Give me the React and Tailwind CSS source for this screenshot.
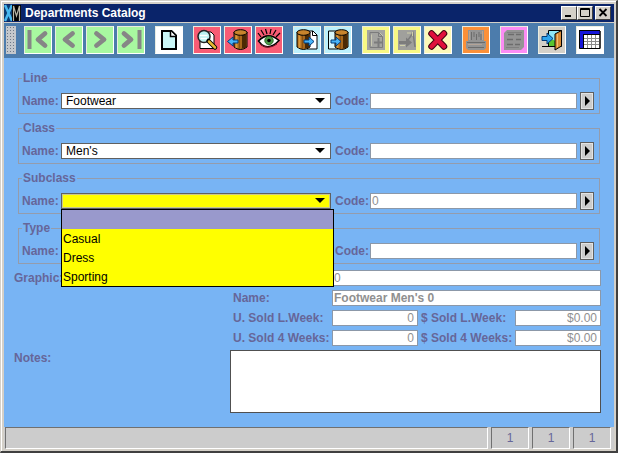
import React, { useState } from "react";

const outline = { stroke: "#000", strokeWidth: 1, strokeLinejoin: "round" };

const Chevron = ({ flip, bar }) => (
  <svg viewBox="1 1 26 26" className="size-full" aria-hidden="true">
    <g transform={flip ? "translate(28 0) scale(-1 1)" : undefined} fill="none" stroke="#868686">
      <path
        d={bar ? "M21 7.500 L14 13.500 L21 19.500" : "M17.500 7.500 L10 13.500 L17.500 19.500"}
        strokeWidth="4.800"
        strokeLinecap="round"
        strokeLinejoin="round"
      />
      {bar && <path d="M5.500 4 V23" strokeWidth="4" />}
    </g>
  </svg>
);

const Svg = ({ children }) => (
  <svg viewBox="1 1 26 26" className="size-full" aria-hidden="true">
    {children}
  </svg>
);

const Barrel = ({ x = 0 }) => (
  <g transform={`translate(${x} 0)`}>
    <path d="M9 6 V21 Q15.500 26 22 21 V6 Z" fill="#a8681c" {...outline} />
    <path d="M11.500 9 V22" stroke="#dc9838" strokeWidth="2" />
    <path d="M14.500 10 V23" stroke="#8a5010" />
    <path d="M19 9 V22" stroke="#4c2a04" strokeWidth="4" />
    <ellipse cx="15.500" cy="6.500" rx="6.500" ry="2.800" fill="#c8842c" {...outline} />
  </g>
);

const RightArrow = ({ x = 0, y = 0 }) => (
  <path transform={`translate(${x} ${y})`} d="M0 -1.500 H5 V-4.500 L10 0 L5 4.500 V1.500 H0 Z" fill="#48b4f8" stroke="#003a78" />
);

const NewIcon = () => (
  <Svg>
    <path d="M7 5 H16.500 L21 9.500 V23 H7 Z" fill="#caf6f6" stroke="#000" strokeWidth="2" />
    <path d="M15.500 5 V10.500 H21" fill="#fff" stroke="#000" strokeWidth="1.500" />
  </Svg>
);

const SearchIcon = () => (
  <Svg>
    <path d="M7 6 H18 L21 9 V22.500 H7 Z" fill="#fff" {...outline} />
    <circle cx="11" cy="10.500" r="6" fill="#baf0f0" stroke="#222" strokeWidth="1.500" />
    <path d="M7 9.500 H14.500 M7.500 12.500 H14" stroke="#fff" strokeWidth="1.500" />
    <path d="M15.500 15 L22 21.500" stroke="#000" strokeWidth="4.500" strokeLinecap="round" />
    <path d="M16 15.500 L22 21.500" stroke="#e8b830" strokeWidth="2.500" strokeLinecap="round" />
  </Svg>
);

const BarrelBackIcon = () => (
  <Svg>
    <Barrel x={1} />
    <path d="M14 14 H9 V11 L3.500 15.500 L9 20 V17 H14 Z" fill="#48b4f8" stroke="#003a78" />
  </Svg>
);

const EyeIcon = () => (
  <Svg>
    <path d="M6 11 L3 7 M9 9 L6 4 M12 8 L10.500 3 M15 8 L16 3 M18 9 L21 4 M21 11 L25 7" stroke="#000" strokeWidth="1.200" />
    <path d="M3.500 15 Q13 5 24 14.500 Q15 24 7 19 Z" fill="#fff" stroke="#000" strokeWidth="1.500" />
    <circle cx="14" cy="14.500" r="4.200" fill="#4b9a48" stroke="#2f6a2c" />
    <circle cx="14" cy="14.500" r="1.800" fill="#000" />
    <path d="M5 18 Q13 24.500 22 18" fill="none" stroke="#7a1328" />
  </Svg>
);

const BarrelToPageIcon = () => (
  <Svg>
    <path d="M14 5 H20 L24 9 V23 H14 Z" fill="#fff" {...outline} />
    <path d="M19.500 5 V9.500 H24" fill="none" {...outline} />
    <Barrel x={-5} />
    <RightArrow x={11} y={15.5} />
  </Svg>
);

const PageToBarrelIcon = () => (
  <Svg>
    <path d="M4.500 5 H14 V23 H4.500 Z" fill="#d9f7fb" {...outline} />
    <Barrel x={2} />
    <RightArrow x={7} y={15.5} />
  </Svg>
);

const PageAddIcon = () => (
  <Svg>
    <rect x="5" y="4" width="18" height="20" fill="#a4a4a0" />
    <path d="M8 6.500 H16.500 L20.500 10.500 V21.500 H8 Z M16.500 6.500 V10.500 H20" fill="none" stroke="#7c7c7c" />
    <path d="M16.500 12 V21 M12 16.500 H21" stroke="#7c7c7c" strokeWidth="2" />
    <path d="M9.500 8.500 V20 M18 7 L21 10" stroke="#c8c8b0" />
  </Svg>
);

const PageSaveIcon = () => (
  <Svg>
    <rect x="5" y="4" width="18" height="20" fill="#a0a09c" />
    <path d="M6 15 H13 V11.500 L19 16.500 L13 21.500 V18 H6 Z" fill="#7c7c7c" />
    <path d="M15 14 L20 7 L22 21" fill="none" stroke="#7c7c7c" strokeWidth="1.500" />
    <path d="M14 7 H18 M19.500 6 V10 M7 19.500 H12" stroke="#d0d0a8" />
  </Svg>
);

const DeleteIcon = () => (
  <Svg>
    <path d="M7.500 7.500 L20 20.500 M20 7.500 L7.500 20.500" stroke="#400010" strokeWidth="6.500" strokeLinecap="round" />
    <path d="M7.500 7.500 L20 20.500 M20 7.500 L7.500 20.500" stroke="#e0103c" strokeWidth="4.500" strokeLinecap="round" />
  </Svg>
);

const PrintIcon = () => (
  <Svg>
    <path d="M6 4 H22 V15 H24 V22 L22 24 H6 L4 22 V15 H6 Z" fill="#949494" />
    <path d="M9.500 6 V14 M12 6 V11 M14.500 8 V14 M17 6 V11 M19 8 V14" stroke="#6c6c6c" />
    <path d="M7.500 5 V14 M20.500 5 V14" stroke="#c0a48c" />
    <path d="M5 16.500 H23 M6 21.500 H22" stroke="#6c6c6c" />
    <path d="M6 18.500 H20" stroke="#b4a498" />
  </Svg>
);

const ReportIcon = () => (
  <Svg>
    <path d="M7 4 H24 V21 L21 24 H4 V7 Z" fill="#949494" />
    <path d="M8 8.500 H14 M7 13.500 H13 M7 18.500 H13 M16 8.500 H21 M16 13.500 H21 M15 18.500 H20" stroke="#6c6c6c" strokeWidth="1.500" />
    <path d="M7 6.500 H22 M6 21.500 H19" stroke="#808080" />
  </Svg>
);

const ExitIcon = () => (
  <Svg>
    <path d="M10.500 4.500 H23.500 V20.500 H10.500 Z" fill="#8fe8f8" {...outline} />
    <path d="M11 16 Q14 12 17 15 V20 H11 Z" fill="#58c430" />
    <path d="M17 8 L23.500 4.500 V20 L17 24 Z" fill="#d98c38" {...outline} />
    <path d="M19.500 8 V21" stroke="#f2bd72" />
    <path d="M4 20.500 H11" stroke="#000" />
    <path d="M4 10.500 H9 V7 L15 12.500 L9 18 V14.500 H4 Z" fill="#2fa4ec" stroke="#003a78" />
  </Svg>
);

const TableIcon = () => (
  <Svg>
    <path d="M4 5 H24 V22.500 H4 Z" fill="#fff" stroke="#000" />
    <path d="M4 5 H24 V8 H7 V22.500 H4 Z" fill="#1414d8" />
    <path d="M3.500 4.500 H24 M7.500 8.500 H24 M7.500 8 V22" stroke="#000" />
    <path d="M8 12.500 H24 M8 15.500 H24 M8 18.500 H24 M11.500 9 V22 M15.500 9 V22 M19.500 9 V22" stroke="#8c8c8c" />
    <path d="M3.500 4 V22.500 H24 V5" fill="none" stroke="#000" />
  </Svg>
);

const toolGroups = [
  [
    { name: "First", color: "bg-[#a8f8a0]", icon: <Chevron bar />, off: true },
    { name: "Previous", color: "bg-[#a8f8a0]", icon: <Chevron />, off: true },
    { name: "Next", color: "bg-[#a8f8a0]", icon: <Chevron flip />, off: true },
    { name: "Last", color: "bg-[#a8f8a0]", icon: <Chevron flip bar />, off: true },
  ],
  [{ name: "New", color: "bg-white", icon: <NewIcon /> }],
  [
    { name: "Search", color: "bg-[#f85c74]", icon: <SearchIcon /> },
    { name: "Retrieve", color: "bg-[#f85c74]", icon: <BarrelBackIcon /> },
    { name: "View", color: "bg-[#f85c74]", icon: <EyeIcon /> },
  ],
  [
    { name: "Export", color: "bg-[#bcf0fc]", icon: <BarrelToPageIcon /> },
    { name: "Import", color: "bg-[#bcf0fc]", icon: <PageToBarrelIcon /> },
  ],
  [
    { name: "Add", color: "bg-[#f8f884]", icon: <PageAddIcon />, off: true },
    { name: "Save", color: "bg-[#f8f884]", icon: <PageSaveIcon />, off: true },
    { name: "Delete", color: "bg-[#fcf8b8]", icon: <DeleteIcon /> },
  ],
  [{ name: "Print", color: "bg-[#fc9038]", icon: <PrintIcon />, off: true }],
  [{ name: "Report", color: "bg-[#fc8cf4]", icon: <ReportIcon />, off: true }],
  [{ name: "Exit", color: "bg-[#d4d0c8]", icon: <ExitIcon /> }],
  [{ name: "Table", color: "bg-white", icon: <TableIcon /> }],
];

const WindowButton = ({ label, children }) => (
  <button
    type="button"
    aria-label={label}
    className="h-3.5 w-4 border border-t-white border-l-white border-r-[#404040] border-b-[#404040] bg-[#d4d0c8]"
  >
    <svg viewBox="0 0 14 12" className="size-full" fill="none" stroke="#000" aria-hidden="true">
      {children}
    </svg>
  </button>
);

const TitleBar = () => (
  <header className="flex h-[18px] items-center bg-[#0a246a] pr-[3px]">
    <svg viewBox="0 0 17 18" className="h-[18px] w-[17px]" aria-hidden="true">
      <path d="M0 1 H8 V17 H0 Z" fill="#0c3c70" />
      <path d="M1 1 L8 17 M8 1 L1 17" stroke="#48b8f0" strokeWidth="2.500" />
      <path d="M8 1 H17 V17 H8 Z" fill="#000" />
      <path d="M9.500 17 V2 L12.500 12 L15.500 2 V17" fill="none" stroke="#b8b4a4" strokeWidth="1.200" />
    </svg>
    <h1 className="flex-1 pl-1 text-[12px] leading-4 font-bold text-white">Departments Catalog</h1>
    <WindowButton label="Minimize">
      <path d="M3 9 H9" strokeWidth="2" />
    </WindowButton>
    <WindowButton label="Maximize">
      <path d="M2.500 1.500 H11.500 V9.500 H2.500 Z M2 2.500 H12" />
    </WindowButton>
    <div className="ml-0.5 flex">
      <WindowButton label="Close">
        <path d="M3.500 2 L10.500 9 M10.500 2 L3.500 9" strokeWidth="1.800" />
      </WindowButton>
    </div>
  </header>
);

const Toolbar = () => (
  <div role="toolbar" className="flex items-center gap-2 border-t border-[#d4d0c8] bg-[#4c7cac] px-0.5 pt-[3px] pb-1">
    <div className="h-7 w-2.5 bg-[#c4c8cc] bg-[radial-gradient(#6c7888_1px,transparent_1px)] bg-[length:3px_3px]" />
    <div className="flex gap-2.5">
      {toolGroups.map((group) => (
        <div key={group[0].name} className="flex gap-[3px]">
          {group.map((tool) => (
            <button
              key={tool.name}
              type="button"
              aria-label={tool.name}
              disabled={tool.off}
              className={`size-7 border border-t-[#e8ece0] border-l-[#e8ece0] border-r-white border-b-white ${tool.color}`}
            >
              {tool.icon}
            </button>
          ))}
        </div>
      ))}
    </div>
  </div>
);

const fieldClass = "h-4 w-full min-w-0 border border-[#8c98a8] bg-white pl-px text-[12px] leading-3.5 text-[#909090] outline-none";
const labelClass = "text-[12px] leading-4 font-bold whitespace-nowrap text-[#666699]";

const LevelGroup = ({ title, id, value, code, items }) => {
  const [name, setName] = useState(value);
  const [codeText, setCodeText] = useState(code);

  return (
    <fieldset className="mr-px ml-1 min-w-0 border border-[#949cac] pt-[7px] pr-[5px] pb-[3px] pl-[3px]">
      <legend className="h-3.5 px-px text-[12px] leading-3.5 font-bold text-[#666699]">{title}</legend>
      <div className="grid grid-cols-[39px_minmax(0,270fr)_39px_minmax(0,207fr)_17px] items-center">
        <label htmlFor={`${id}-name`} className={labelClass}>
          Name:
        </label>
        <div className="relative">
          <select
            id={`${id}-name`}
            value={name}
            onChange={(e) => setName(e.target.value)}
            className={`block h-4 w-full appearance-none border border-[#606060] px-1 text-[12px] leading-3.5 text-black outline-none ${
              items ? "bg-[#ffff00] inset-ring inset-ring-[#c8c890]" : "bg-white"
            }`}
          >
            <option value={value}>{value}</option>
            {items && items.map((item) => <option key={item}>{item}</option>)}
          </select>
          <svg viewBox="0 0 10 5" className="pointer-events-none absolute top-[5px] right-1.5 h-[5px] w-2.5" aria-hidden="true">
            <path d="M0 0 H10 L5 5 Z" />
          </svg>
          {items && (
            <ul
              role="listbox"
              aria-label={title}
              className="absolute top-full left-0 z-10 w-[calc(100%+3px)] border border-black bg-[#ffff00] text-[12px] leading-5 text-black"
            >
              <li role="option" aria-selected="true" className="h-[19px] bg-[#9999cc]" />
              {items.map((item) => (
                <li key={item} role="option" aria-selected="false" className="h-[19px] px-px" onClick={() => setName(item)}>
                  {item}
                </li>
              ))}
            </ul>
          )}
        </div>
        <label htmlFor={`${id}-code`} className={`pl-1 ${labelClass}`}>
          Code:
        </label>
        <input id={`${id}-code`} value={codeText} onChange={(e) => setCodeText(e.target.value)} className={fieldClass} />
        <button
          type="button"
          aria-label={`Find ${title}`}
          className="flex h-[18px] w-3.5 items-center justify-center justify-self-end border border-[#606060] bg-[#cccccc] inset-ring inset-ring-[#e4e4e4]"
        >
          <svg viewBox="0 0 5 10" className="h-2.5 w-[5px]" aria-hidden="true">
            <path d="M0 0 L5 5 L0 10 Z" />
          </svg>
        </button>
      </div>
    </fieldset>
  );
};

const sales = [
  { id: "units-week", label: "U. Sold L.Week:", value: "0" },
  { id: "amount-week", label: "$ Sold L.Week:", value: "$0.00" },
  { id: "units-month", label: "U. Sold 4 Weeks:", value: "0" },
  { id: "amount-month", label: "$ Sold 4 Weeks:", value: "$0.00" },
];

const Details = () => (
  <div className="mt-1.5 grid grid-cols-[minmax(0,216fr)_minmax(0,371fr)] gap-y-1">
    <div className={labelClass}>Graphic:</div>
    <div className="grid grid-cols-[102px_minmax(0,86fr)_97px_minmax(0,86fr)] items-center gap-y-1">
      <input aria-label="Code" readOnly value="0" className={`col-span-3 col-start-2 ${fieldClass}`} />
      <label htmlFor="full-name" className={`pl-[3px] ${labelClass}`}>
        Name:
      </label>
      <input id="full-name" readOnly value="Footwear Men's 0" className={`col-span-3 font-bold ${fieldClass}`} />
      {sales.map((field) => (
        <React.Fragment key={field.id}>
          <label htmlFor={field.id} className={`pl-[3px] ${labelClass}`}>
            {field.label}
          </label>
          <input id={field.id} readOnly value={field.value} className={`pr-[3px] text-right ${fieldClass}`} />
        </React.Fragment>
      ))}
    </div>
    <label htmlFor="notes" className={labelClass}>
      Notes:
    </label>
    <textarea id="notes" className="block h-[63px] w-full resize-none border border-[#505050] bg-white px-1 text-[12px] outline-none" />
  </div>
);

const StatusBar = () => (
  <footer className="grid h-[22px] grid-cols-[minmax(0,1fr)_38px_38px_38px] gap-[3px] bg-[#cccccc] pr-[3px] pl-px text-center text-[12px] leading-5 text-[#666699]">
    <div className="border border-t-[#707070] border-l-[#707070] border-r-white border-b-white" />
    {[1, 2, 3].map((cell) => (
      <div key={cell} className="border border-t-[#707070] border-l-[#707070] border-r-white border-b-white">
        1
      </div>
    ))}
  </footer>
);

const App = () => {
  return (
    <div className="flex min-h-screen flex-col border-t border-r-2 border-b-2 border-l border-t-[#d4d0c8] border-r-[#404040] border-b-[#404040] border-l-[#d4d0c8] bg-[#d4d0c8] font-['Liberation_Sans',Arial,sans-serif]">
      <div className="flex flex-1 flex-col border-t border-l border-white pt-0.5 pr-0.5 pb-0.5 pl-0.5">
        <TitleBar />
        <Toolbar />
        <main className="flex-1 bg-[#78b4f4] pt-[13px] pr-[13px] pb-3 pl-2.5">
          <div className="flex flex-col gap-[7px]">
            <LevelGroup title="Line" id="line" value="Footwear" code="" />
            <LevelGroup title="Class" id="class" value="Men's" code="" />
            <LevelGroup title="Subclass" id="subclass" value="" code="0" items={["Casual", "Dress", "Sporting"]} />
            <LevelGroup title="Type" id="type" value="" code="" />
          </div>
          <Details />
        </main>
        <StatusBar />
      </div>
    </div>
  );
};

export default App;
